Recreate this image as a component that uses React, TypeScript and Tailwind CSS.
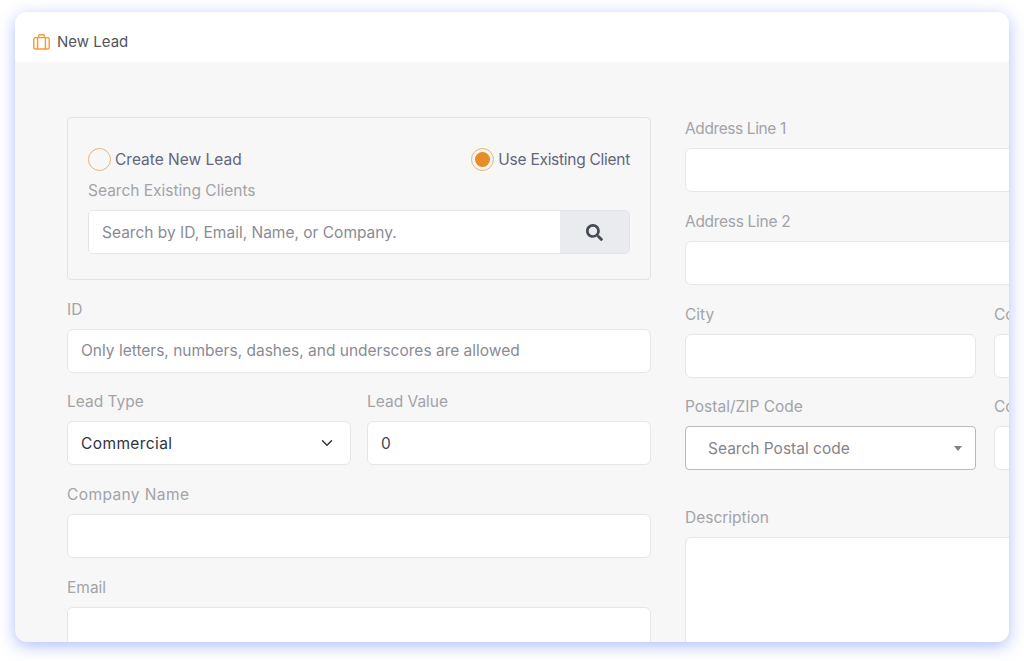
import { ChevronDown } from "lucide-react";
import { FaSearch } from "react-icons/fa";

const inputCls =
  "block w-full h-[44px] rounded-[6px] border border-[#e6e6ea] bg-white px-[13px] text-[15.5px] text-[#3f4254] placeholder:text-[#8b8b93] outline-none";
const labelCls = "mb-[10px] block h-[20px] text-[15.5px] leading-[22px] text-[#a3a3a8]";

function Field({ label, children, labelClass = "" }: { label: string; children?: React.ReactNode; labelClass?: string }) {
  return (
    <div className="mb-[18.6px]">
      <label className={`${labelCls} ${labelClass}`}>{label}</label>
      {children ?? <input className={inputCls} />}
    </div>
  );
}

function Briefcase() {
  return (
    <svg width="17" height="16" viewBox="0 0 17 16" fill="none" stroke="#f99a2e" strokeWidth="1.4" strokeLinejoin="round">
      <rect x="0.8" y="3.6" width="15.4" height="11.4" rx="1.6" />
      <path d="M4.6 3.6V15M12.4 3.6V15M5.6 3.6V1.8C5.6 1.2 6 0.8 6.6 0.8H10.4C11 0.8 11.4 1.2 11.4 1.8V3.6" />
    </svg>
  );
}

function Radio({ label, checked, textClass = "" }: { label: string; checked?: boolean; textClass?: string }) {
  return (
    <div className="flex items-center gap-[4px]">
      <span className="flex size-[23px] items-center justify-center rounded-full border border-[#eeb06f]">
        {checked && <span className="size-[15px] rounded-full bg-[#e88c25]" />}
      </span>
      <span className={`text-[15.5px] text-[#62657c] ${textClass}`}>{label}</span>
    </div>
  );
}

export default function App() {
  return (
    <div className="h-[661px] w-[1024px] overflow-hidden bg-white pl-[15px] pt-[12px] font-['Inter',sans-serif]">
      <div className="h-[630px] w-[994px] overflow-hidden rounded-[12px] bg-[#f7f7f7] shadow-[0_4px_16px_rgba(100,130,255,0.5)]">
        {/* Header */}
        <div className="flex h-[50px] items-center gap-[7px] bg-white pl-[18px] pt-[10px]">
          <Briefcase />
          <span className="text-[15px] text-[#55555c]">New Lead</span>
        </div>

        <div className="flex gap-[34px] pl-[52px] pt-[55px]">
          {/* Left column */}
          <div className="w-[584px] shrink-0">
            <div className="mb-[18.8px] h-[163px] rounded-[4px] border border-[#e3e3e6] px-[20px] pt-[30px]">
              <div className="flex items-center justify-between">
                <Radio label="Create New Lead" />
                <Radio label="Use Existing Client" checked textClass="tracking-[-0.27px]" />
              </div>
              <div className="mt-[8px] h-[21px] text-[15.5px] leading-[23px] text-[#a3a3a8]">Search Existing Clients</div>
              <div className="mt-[10px] flex h-[44px] overflow-hidden rounded-[5px] border border-[#e3e4ea]">
                <input
                  className="min-w-0 flex-1 bg-white px-[13px] text-[15.5px] text-[#3f4254] placeholder:text-[#8b8b93] outline-none"
                  placeholder="Search by ID, Email, Name, or Company."
                />
                <div className="flex w-[69px] items-center justify-center bg-[#e9ebef] text-[#454a54]">
                  <FaSearch size={17} />
                </div>
              </div>
            </div>

            <Field label="ID">
              <input className={inputCls} placeholder="Only letters, numbers, dashes, and underscores are allowed" />
            </Field>

            <div className="grid grid-cols-2 gap-x-[16px]">
              <Field label="Lead Type">
                <div className={`${inputCls} flex items-center justify-between pr-[14px]`}>
                  <span className="tracking-[0.4px] text-[#2f3340]">Commercial</span>
                  <ChevronDown size={18} className="text-[#33363f]" />
                </div>
              </Field>
              <Field label="Lead Value">
                <input className={inputCls} defaultValue="0" />
              </Field>
            </div>

            <Field label="Company Name" labelClass="tracking-[0.4px]" />
            <Field label="Email" />
          </div>

          {/* Right column */}
          <div className="w-[600px] shrink-0 pt-[1.4px]">
            <Field label="Address Line 1" labelClass="tracking-[-0.4px]" />
            <Field label="Address Line 2" labelClass="tracking-[-0.3px]" />
            <div className="grid grid-cols-2 gap-x-[18px]">
              <Field label="City" />
              <Field label="Country" />
              <Field label="Postal/ZIP Code">
                <div className="flex h-[44px] items-center justify-between rounded-[4px] border border-[#b9b9b9] bg-white pl-[22px] pr-[13px] text-[15.5px] text-[#85858c]">
                  <span>Search Postal code</span>
                  <span className="border-x-[4.5px] border-t-[5px] border-x-transparent border-t-[#808080]" />
                </div>
              </Field>
              <Field label="County" />
            </div>
            <div className="pt-[18px]">
              <label className={labelCls}>Description</label>
              <textarea className="block h-[200px] w-full resize-none rounded-[6px] border border-[#e6e6ea] bg-white" />
            </div>
          </div>
        </div>
      </div>
    </div>
  );
}
